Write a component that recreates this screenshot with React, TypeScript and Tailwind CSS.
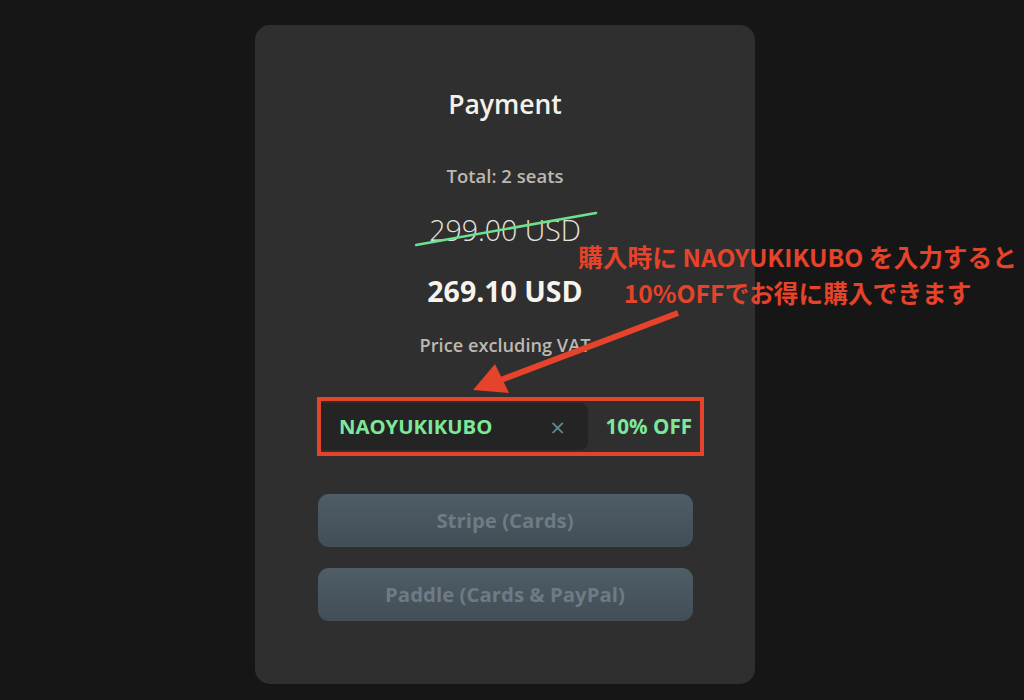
const App = () => {
  return (
    <div className="relative w-[1024px] h-[700px] bg-[#161616] overflow-hidden font-['Open_Sans',sans-serif]">
      <div className="ml-[255px] mt-[25px] w-[500px] h-[659px] rounded-[15px] bg-[#2f2f2f] flex flex-col items-center">
        <p className="mt-[62px] text-[26.5px] leading-[34px] font-semibold text-[#f4f1ea]">Payment</p>
        <p className="mt-[42px] text-[18.5px] leading-[26px] font-semibold text-[#bdb8b0]">Total: 2 seats</p>
        <div className="relative mt-[22px]">
          <p className="text-[28.5px] leading-[38px] font-light text-[#e6e3dc]">299.00 USD</p>
          <svg className="absolute left-[-14px] top-0" width="184" height="38" viewBox="0 0 184 38">
            <line x1="1" y1="34" x2="181" y2="2" stroke="#6fe08f" strokeWidth="2.5" strokeLinecap="round" />
          </svg>
        </div>
        <p className="mt-[23px] text-[28.5px] leading-[38px] font-bold text-[#f7f4ee]">269.10 USD</p>
        <p className="mt-[22px] text-[18.2px] leading-[26px] font-semibold text-[#bdb8b0]">Price excluding VAT</p>

        <div className="self-start ml-[62px] mt-[39px] w-[387px] h-[59px] border-4 border-[#e5432b] flex items-center py-[2px] pr-[4px]">
          <div className="h-full w-[267px] bg-[#242424] rounded-r-lg flex items-center pl-[18px] pr-[23px]">
            <span className="flex-1 text-[20.3px] font-bold text-[#7ee89a]">NAOYUKIKUBO</span>
            <span className="text-[26px] leading-none text-[#5c8a90]">×</span>
          </div>
          <span className="ml-auto mr-[4px] text-[20.6px] font-bold text-[#7ee89a]">10% OFF</span>
        </div>

        <div className="mt-[38px] flex flex-col gap-[21px]">
          <button className="w-[375px] h-[53px] rounded-[11px] bg-gradient-to-b from-[#4e5d66] to-[#424e56] text-[20.4px] font-bold text-[#6e7b84]">
            Stripe (Cards)
          </button>
          <button className="w-[375px] h-[53px] rounded-[11px] bg-gradient-to-b from-[#4e5d66] to-[#424e56] text-[20.4px] font-bold text-[#6e7b84]">
            Paddle (Cards &amp; PayPal)
          </button>
        </div>
      </div>

      <div className="absolute left-[560px] top-[238px] w-[475px] flex flex-col items-center font-['Noto_Sans_CJK_JP',sans-serif] font-bold text-[24.7px] leading-[36px] text-[#e5432b]">
        <p>購入時に NAOYUKIKUBO を入力すると</p>
        <p>10%OFFでお得に購入できます</p>
      </div>

      <svg className="absolute left-0 top-0" width="1024" height="700" viewBox="0 0 1024 700">
        <line x1="678" y1="313" x2="498" y2="381" stroke="#e5432b" strokeWidth="6" />
        <polygon points="473,390 495,364 509,393" fill="#e5432b" />
      </svg>
    </div>
  );
};

export default App;
